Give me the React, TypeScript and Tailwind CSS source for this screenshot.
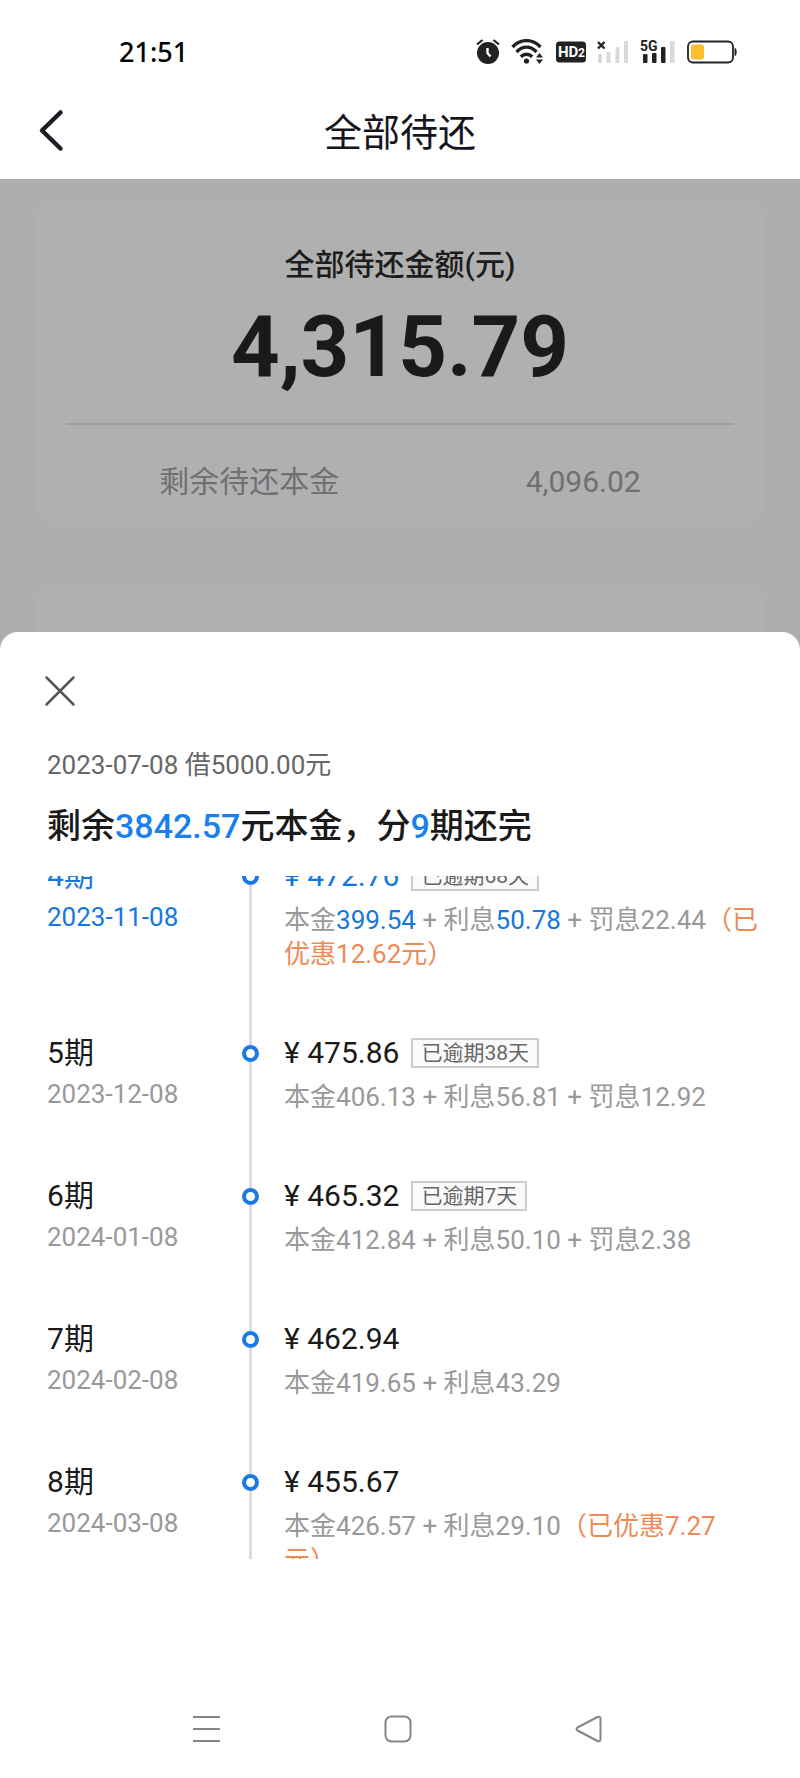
// App.tsx
import { useLayoutEffect, useRef } from "react";

interface Installment {
  term: number;
  date: string;
  amount: string;
  principal: string;
  interest: string;
  penalty?: string;
  overdueDays?: number;
  discount?: string;
  active?: boolean;
}

const installments: Installment[] = [
  {
    term: 4,
    date: "2023-11-08",
    amount: "472.76",
    principal: "399.54",
    interest: "50.78",
    penalty: "22.44",
    overdueDays: 68,
    discount: "12.62",
    active: true,
  },
  {
    term: 5,
    date: "2023-12-08",
    amount: "475.86",
    principal: "406.13",
    interest: "56.81",
    penalty: "12.92",
    overdueDays: 38,
  },
  {
    term: 6,
    date: "2024-01-08",
    amount: "465.32",
    principal: "412.84",
    interest: "50.10",
    penalty: "2.38",
    overdueDays: 7,
  },
  {
    term: 7,
    date: "2024-02-08",
    amount: "462.94",
    principal: "419.65",
    interest: "43.29",
  },
  {
    term: 8,
    date: "2024-03-08",
    amount: "455.67",
    principal: "426.57",
    interest: "29.10",
    discount: "7.27",
  },
];

function AlarmIcon() {
  return (
    <svg width="24" height="26" viewBox="0 0 24 26" fill="none">
      <circle cx="12" cy="14" r="11" fill="#222" />
      <path d="M1 5.5 6.5 1M23 5.5 17.5 1" stroke="#222" strokeWidth="2.2" />
      <path d="M11.5 9v5l3 3.5" stroke="#fff" strokeWidth="2.4" />
    </svg>
  );
}

function WifiIcon() {
  return (
    <svg width="34" height="26" viewBox="0 0 34 26" fill="none">
      <g stroke="#222" strokeWidth="3.4">
        <path d="M1.5 8C9.5-.5 21.5-.5 29.5 8" />
        <path d="M5.5 13C11.5 6.5 19.5 6.5 25.5 13" />
        <path d="M9.8 17.8c3.5-3.5 7.9-3.5 11.4 0" />
      </g>
      <circle cx="15.5" cy="22" r="2.6" fill="#222" />
      <path d="M25 18.5 28.5 14 32 18.5zM25 20.5h7L28.5 25z" fill="#222" />
    </svg>
  );
}

function HdIcon() {
  return (
    <svg width="30" height="24" viewBox="0 0 30 24">
      <rect width="30" height="21" y="1.5" rx="3.5" fill="#222" />
      <text x="2" y="17" fill="#fff" fontSize="15" fontWeight="700" fontFamily="Roboto, sans-serif">
        HD
      </text>
      <text x="22" y="17" fill="#fff" fontSize="12" fontWeight="700" fontFamily="Roboto, sans-serif">
        2
      </text>
    </svg>
  );
}

function NoSignalIcon() {
  return (
    <svg width="32" height="24" viewBox="0 0 32 24" fill="#d9d9d9">
      <path d="M1 2l6.5 6.5M7.5 2 1 8.5" stroke="#222" strokeWidth="2.4" />
      <rect x="1" y="14" width="4" height="9" rx="1" />
      <rect x="9.5" y="12" width="4" height="11" rx="1" />
      <rect x="18.5" y="7" width="4" height="16" rx="1" />
      <rect x="27" y="1" width="4" height="22" rx="1" />
    </svg>
  );
}

function SignalIcon() {
  return (
    <svg width="36" height="28" viewBox="0 0 36 28" fill="#222">
      <text x="0" y="13" fontSize="14" fontWeight="700" fontFamily="Roboto, sans-serif">
        5G
      </text>
      <rect x="3" y="16" width="4.5" height="9" rx="1" />
      <rect x="12" y="15" width="4.5" height="10" rx="1" />
      <rect x="21" y="9" width="4.5" height="16" rx="1" />
      <rect x="30" y="3" width="4.5" height="22" rx="1" fill="#d9d9d9" />
    </svg>
  );
}

function BatteryIcon() {
  return (
    <svg width="50" height="24" viewBox="0 0 50 24">
      <rect x="1" y="1.5" width="45" height="21" rx="5" fill="none" stroke="#222" strokeWidth="1.8" />
      <rect x="4" y="4.5" width="13" height="15" rx="3" fill="#fbc02d" />
      <path d="M48 8.5c1.5 0 1.5 7 0 7z" fill="#222" stroke="#222" />
    </svg>
  );
}

function StatusBar() {
  return (
    <div className="flex h-[103px] items-center justify-between pl-[119px] pr-[63px]">
      <span className="font-['Noto_Sans',sans-serif] text-[27px] leading-[36px] font-medium text-black">21:51</span>
      <div className="flex items-center gap-[11px]">
        <AlarmIcon />
        <WifiIcon />
        <HdIcon />
        <NoSignalIcon />
        <SignalIcon />
        <BatteryIcon />
      </div>
    </div>
  );
}

function InstallmentRow({ item }: { item: Installment }) {
  const figure = item.active ? "text-[#1677e0]" : "";

  return (
    <li className="grid grid-cols-[169px_68px_1fr]">
      <div>
        <p className={`text-[30px] leading-[40px] ${item.active ? "text-[#1677e0]" : "text-[#1a1a1a]"}`}>
          {item.term}期
        </p>
        <p className={`mt-1 text-[26px] leading-[34px] ${item.active ? "text-[#1677e0]" : "text-[#999]"}`}>
          {item.date}
        </p>
      </div>

      <div className="flex flex-col items-center">
        <span className="h-3 w-[3px] bg-[#dcdce6]" />
        <span className="h-[17px] w-[17px] rounded-full border-4 border-[#1a7ae6] bg-white" />
        <span className="w-[3px] flex-1 bg-[#dcdce6]" />
      </div>

      <div className="pb-[62px]">
        <div className="flex h-10 items-center gap-3">
          <span
            className={`text-[30px] leading-[40px] ${item.active ? "text-[#1677e0]" : "text-[#1a1a1a]"}`}
          >
            ¥ {item.amount}
          </span>
          {item.overdueDays && (
            <span className="border-2 border-[#ccc] bg-[#fafafa] px-2 text-[21px] leading-[26px] text-[#666]">
              已逾期{item.overdueDays}天
            </span>
          )}
        </div>
        <p className="mt-[7px] text-[26px] leading-[34px] text-[#999]">
          本金<span className={figure}>{item.principal}</span> + 利息
          <span className={figure}>{item.interest}</span>
          {item.penalty && <> + 罚息{item.penalty}</>}
          {item.discount && <span className="text-[#ee8a55]">（已优惠{item.discount}元）</span>}
        </p>
      </div>
    </li>
  );
}

export default function App() {
  const listRef = useRef<HTMLUListElement>(null);

  // start with the current installment scrolled halfway under the heading
  useLayoutEffect(() => {
    if (listRef.current) listRef.current.scrollTop = 20;
  }, []);

  return (
    <div className="flex min-h-screen flex-col bg-[#aeaeae] font-[Roboto,'Noto_Sans_CJK_SC',sans-serif]">
      <header className="bg-white">
        <StatusBar />
        <div className="grid h-[76px] grid-cols-[1fr_auto_1fr] items-start">
          <button type="button" aria-label="返回" className="ml-[38px] mt-1 w-7">
            <svg width="26" height="46" viewBox="0 0 26 46" fill="none" stroke="#1c1c24" strokeWidth="4.5">
              <path d="M22.5 5.5 4 23.5 22.5 41.5" strokeLinecap="round" strokeLinejoin="round" />
            </svg>
          </button>
          <h1 className="text-[38px] leading-[60px] text-[#15151c]">全部待还</h1>
        </div>
      </header>

      <main className="px-9 pt-6">
        <section className="rounded-2xl bg-[#b0b0b0] px-[30px] pt-10">
          <h2 className="text-center text-[30px] leading-[44px] font-medium text-[#1c1c1c]">全部待还金额(元)</h2>
          <p className="text-center text-[85px] leading-[120px] font-bold text-[#1a1a1a]">4,315.79</p>
          <div className="mt-4 border-t-2 border-[#9e9e9e]" />
          <dl className="flex justify-around pt-[35px] pb-[18px] text-[30px] leading-[44px] text-[#6e7073]">
            <dt>剩余待还本金</dt>
            <dd>4,096.02</dd>
          </dl>
        </section>
        <section className="mt-[66px] h-11 rounded-t-2xl bg-[#b0b0b0]" />
      </main>

      <div role="dialog" aria-label="还款计划" className="flex flex-1 flex-col rounded-t-[18px] bg-white">
        <div className="pl-[47px] pr-10">
          <button type="button" aria-label="关闭" className="-ml-[3px] mt-[43px] block">
            <svg width="32" height="32" viewBox="0 0 32 32" fill="none" stroke="#555" strokeWidth="2.5">
              <path d="M2.5 2.5l27 27M29.5 2.5l-27 27" strokeLinecap="round" />
            </svg>
          </button>
          <p className="mt-[41px] text-[26px] leading-[34px] text-[#666]">2023-07-08 借5000.00元</p>
          <h2 className="mt-5 text-[34px] leading-[48px] font-medium text-[#1a1a1a]">
            剩余<span className="text-[#1a80f0]">3842.57</span>元本金，分<span className="text-[#1a80f0]">9</span>期还完
          </h2>
          <ul ref={listRef} className="mt-[26px] h-[683px] overflow-y-auto [scrollbar-width:none]">
            {installments.map((item) => (
              <InstallmentRow key={item.term} item={item} />
            ))}
          </ul>
        </div>

        <nav className="mt-auto flex items-center justify-between pb-[35px] pl-[192px] pr-[197px]">
          <button type="button" aria-label="最近任务">
            <svg width="28" height="28" viewBox="0 0 28 28" stroke="#858585" strokeWidth="2">
              <path d="M1 2h27M1 14h27M1 26h27" />
            </svg>
          </button>
          <button type="button" aria-label="主屏幕">
            <svg width="28" height="28" viewBox="0 0 28 28" fill="none" stroke="#858585" strokeWidth="2">
              <rect x="1.5" y="1.5" width="25" height="25" rx="6" />
            </svg>
          </button>
          <button type="button" aria-label="返回上一级">
            <svg width="28" height="28" viewBox="0 0 28 28" fill="none" stroke="#858585" strokeWidth="2">
              <path
                d="M2.5 12.5 22.5 2Q25.5 1 25.5 4v20q0 3-3 2L2.5 15.5q-2-1.5 0-3z"
                strokeLinejoin="round"
              />
            </svg>
          </button>
        </nav>
      </div>
    </div>
  );
}
